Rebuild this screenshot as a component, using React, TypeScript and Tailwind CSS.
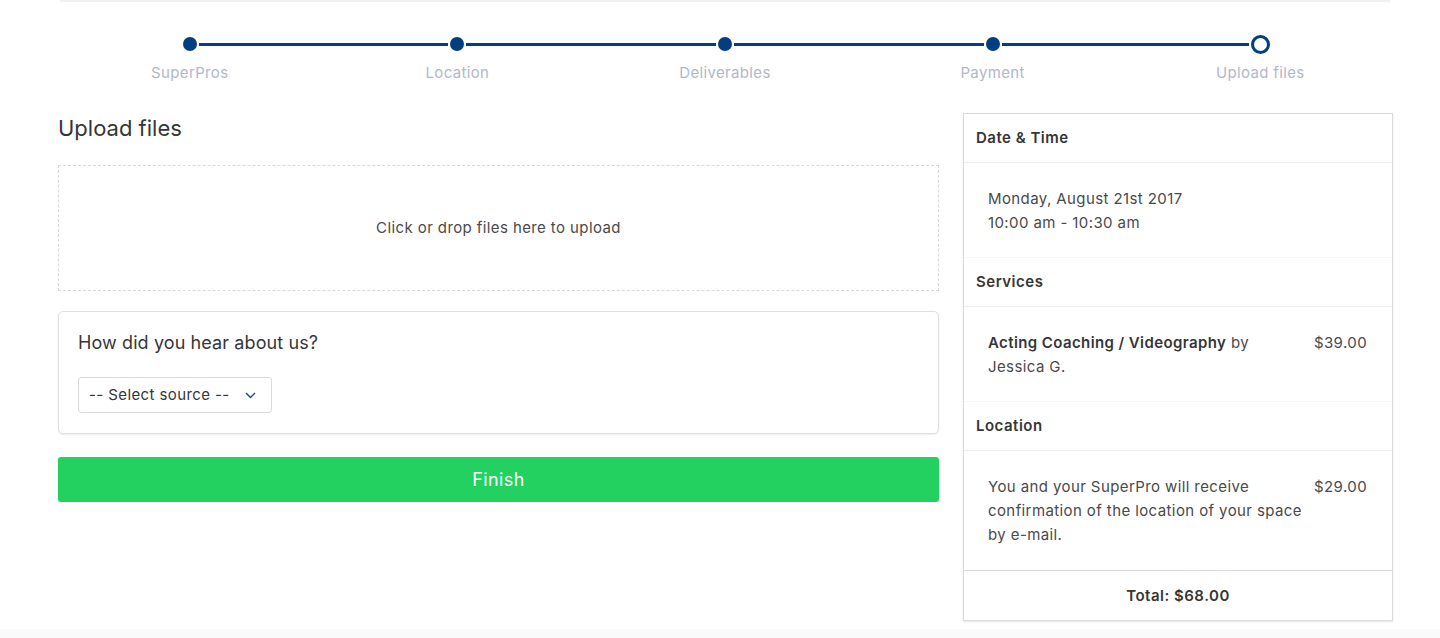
import React from "react";

const steps = ["SuperPros", "Location", "Deliverables", "Payment", "Upload files"];

function Stepper() {
  return (
    <div className="ml-[56px] w-[1338px] grid grid-cols-5 mt-[32px]">
      {steps.map((s, i) => {
        const last = i === steps.length - 1;
        return (
          <div key={s} className="flex flex-col items-center">
            <div className="flex items-center w-full h-[20px]">
              <div className={`flex-1 h-[3px] mr-[2px] ${i === 0 ? "bg-transparent" : "bg-[#033e80]"}`} />
              {last ? (
                <div className="w-[19px] h-[19px] rounded-full border-[3px] border-[#033e80] bg-white" />
              ) : (
                <div className="w-[14px] h-[14px] rounded-full bg-[#033e80]" />
              )}
              <div className={`flex-1 h-[3px] ml-[2px] ${last ? "bg-transparent" : "bg-[#033e80]"}`} />
            </div>
            <div className="mt-[9px] text-[15px] leading-[20px] tracking-[0.35px] text-[#b2b8c8]">{s}</div>
          </div>
        );
      })}
    </div>
  );
}

function SectionHeader({ children }: { children: React.ReactNode }) {
  return (
    <div className="h-[49px] flex items-center px-[12px] border-b border-[#ececec] text-[15px] font-semibold tracking-[0.5px] text-[#363636]">
      {children}
    </div>
  );
}

export default function App() {
  return (
    <div
      className="min-h-[638px] flex flex-col bg-white text-[#4a4a4a] tracking-[0.4px]"
      style={{ fontFamily: "Inter, 'Noto Sans', 'Liberation Sans', sans-serif" }}
    >
      <div className="ml-[60px] w-[1330px] h-[2px] bg-[#f1f1f1]" />
      <Stepper />
      <div className="ml-[58px] w-[1335px] flex gap-[24px] mt-[30px] pb-[8px]">
        <div className="flex-1 flex flex-col">
          <h1 className="text-[22px] leading-[30px] tracking-[0px] text-[#363636] font-normal">Upload files</h1>
          <div className="mt-[22px] h-[126px] border border-dashed border-[#d9d9d9] flex items-center justify-center text-[15px] text-[#4a4a4a]">
            Click or drop files here to upload
          </div>
          <div className="mt-[20px] border border-[#e0e0e0] rounded-[5px] shadow-[0_1px_2px_rgba(0,0,0,0.08)] px-[19px] pt-[19px] pb-[20px]">
            <div className="text-[18px] leading-[24px] tracking-[0.1px] text-[#363636]">How did you hear about us?</div>
            <div className="mt-[22px] w-[194px] h-[36px] border border-[#dbdbdb] rounded-[3px] flex items-center justify-between pl-[10px] pr-[15px] text-[15px] text-[#363636]">
              <span>-- Select source --</span>
              <svg width="11" height="7" viewBox="0 0 11 7" fill="none">
                <path d="M1 1l4.5 4.5L10 1" stroke="#1d4a8c" strokeWidth="1.4" />
              </svg>
            </div>
          </div>
          <button className="mt-[23px] h-[45px] w-full rounded-[3px] bg-[#23d160] text-white text-[18px]">
            Finish
          </button>
        </div>
        <div className="w-[430px] border border-[#dbdbdb] shadow-[0_1px_2px_rgba(0,0,0,0.1)] flex flex-col text-[15px] leading-[24px]">
          <SectionHeader>Date &amp; Time</SectionHeader>
          <div className="px-[24px] pt-[24px] pb-[22px] border-b border-[#f8f8f8]">
            <div>Monday, August 21st 2017</div>
            <div>10:00 am - 10:30 am</div>
          </div>
          <SectionHeader>Services</SectionHeader>
          <div className="px-[24px] pt-[24px] pb-[22px] flex justify-between gap-[8px] border-b border-[#f8f8f8]">
            <div className="w-[290px]">
              <span className="font-semibold text-[#363636]">Acting Coaching / Videography</span> by Jessica G.
            </div>
            <div className="pr-[1px]">$39.00</div>
          </div>
          <SectionHeader>Location</SectionHeader>
          <div className="px-[24px] pt-[24px] pb-[23px] flex justify-between gap-[8px]">
            <div className="w-[318px]">
              You and your SuperPro will receive confirmation of the location of your space by e-mail.
            </div>
            <div className="pr-[1px]">$29.00</div>
          </div>
          <div className="h-[50px] border-t border-[#dbdbdb] flex items-center justify-center font-semibold tracking-[0.5px] text-[#363636]">
            Total: $68.00
          </div>
        </div>
      </div>
      <div className="flex-1 bg-[#fafafa]" />
    </div>
  );
}
